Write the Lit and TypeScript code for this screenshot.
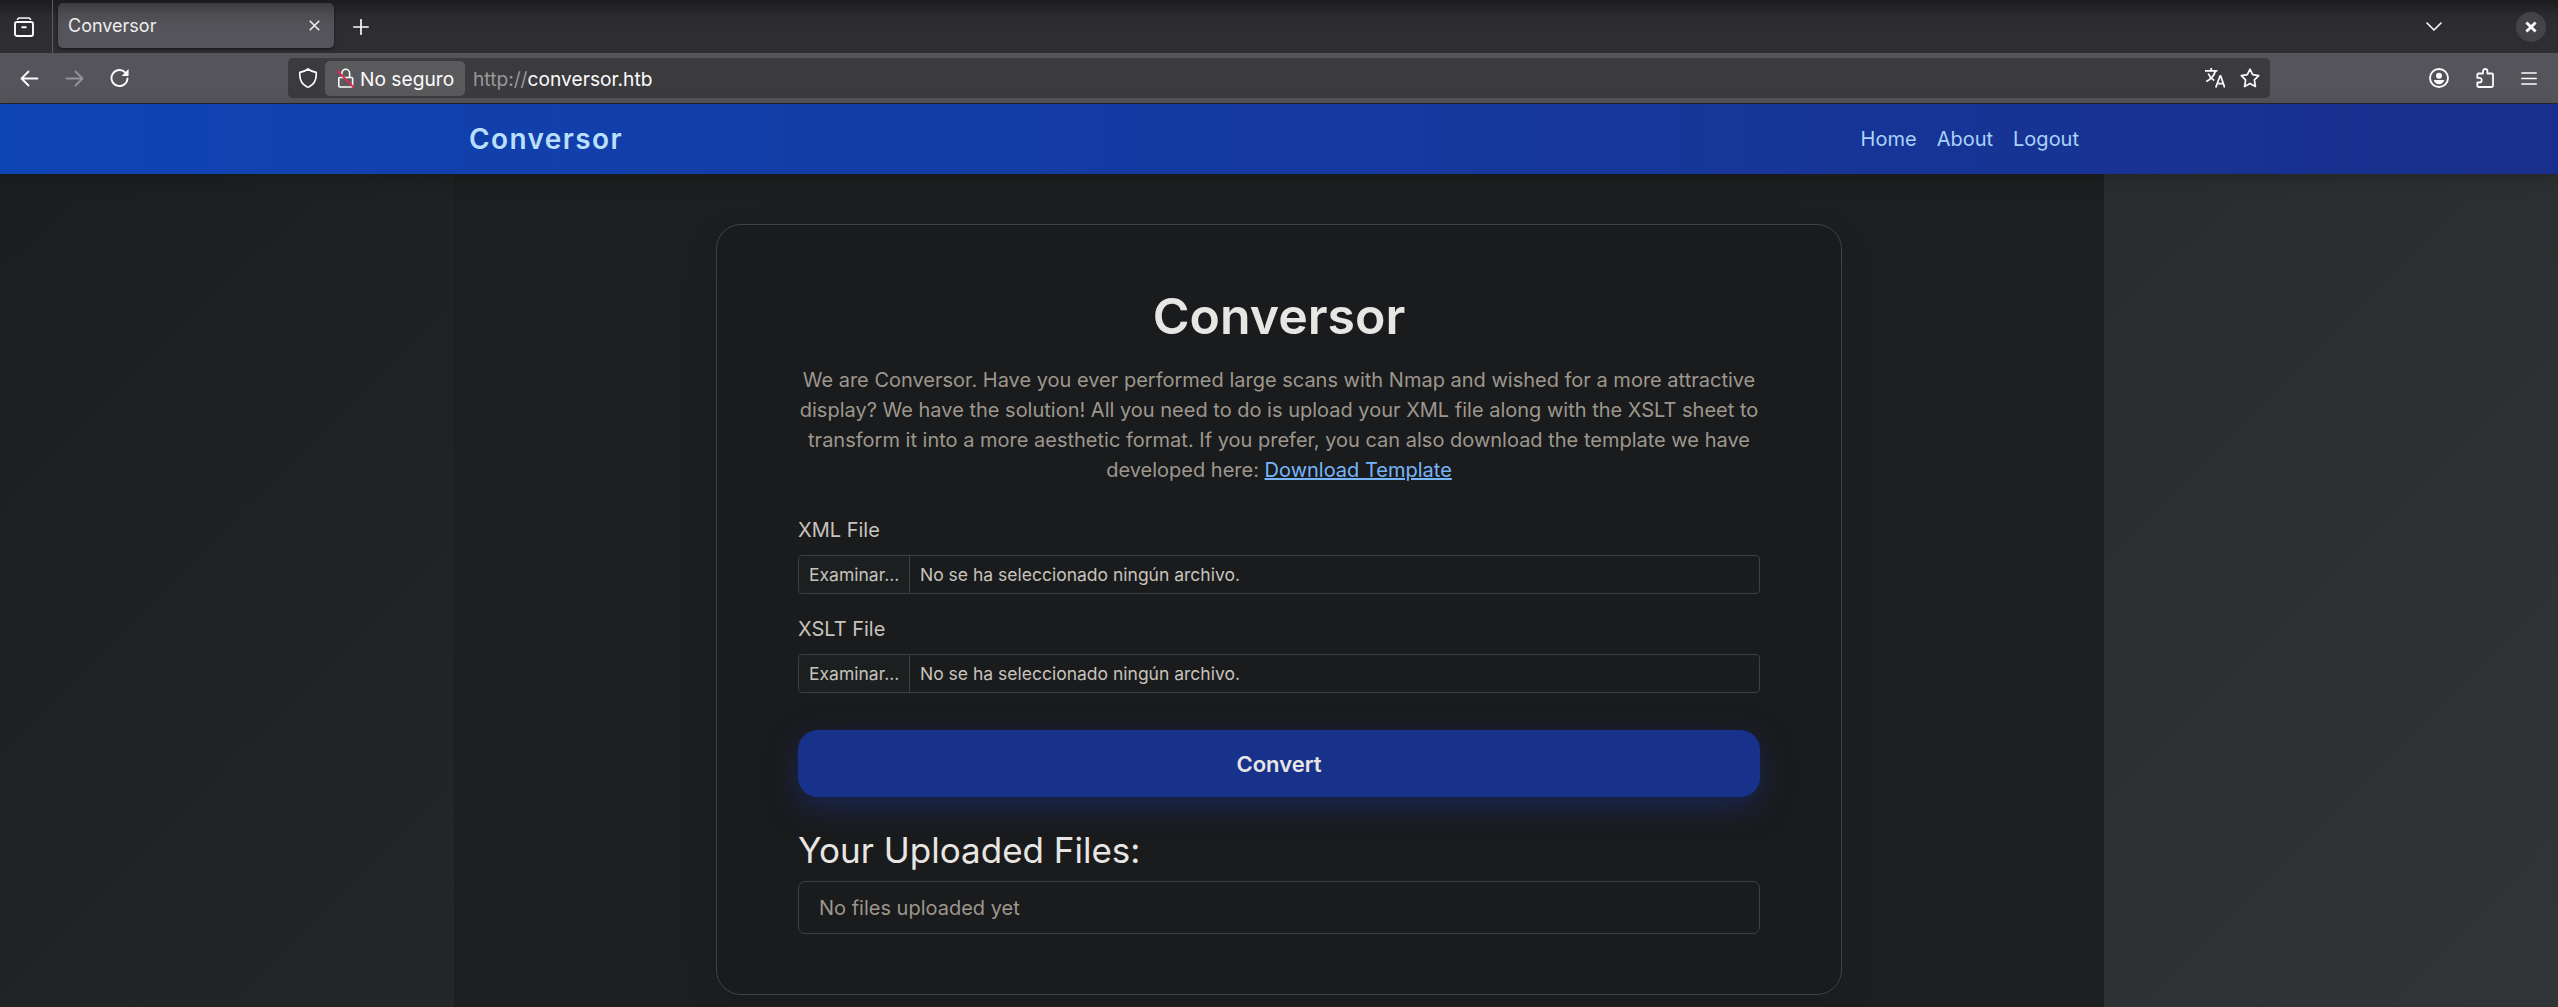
import { LitElement, html, css, svg } from "lit";
import { customElement } from "lit/decorators.js";

const icon = (body: unknown, w = 20, h = 20) =>
  html`<svg width=${w} height=${h} viewBox="0 0 ${w} ${h}" fill="none" stroke="currentColor" stroke-width="1.7" stroke-linecap="round" stroke-linejoin="round">${body}</svg>`;

const icons = {
  view: icon(svg`<path d="M3.600 2.200C3.900 1.300 4.600 1 5.400 1h9.200c.8 0 1.500.3 1.800 1.200"/><rect x="1" y="5" width="18" height="14" rx="2" stroke-width="1.900"/><path d="M8.200 10.300h3.600" stroke-width="1.900"/>`),
  close: icon(svg`<path d="M1.200 1.200l8.600 8.600M9.800 1.200L1.200 9.800" stroke-width="1.600"/>`, 11, 11),
  plus: icon(svg`<path d="M8 .8v14.400M.8 8h14.400" stroke-width="1.700"/>`, 16, 16),
  chevron: icon(svg`<path d="M1 1l7 7 7-7" stroke-width="1.600"/>`, 16, 9),
  winClose: icon(svg`<path d="M1.400 1.400l9.200 9.200M10.600 1.400l-9.200 9.200" stroke-width="2.800" stroke-linecap="butt"/>`, 12, 12),
  back: icon(svg`<path d="M8.500 1.500L1.500 8.500l7 7M1.500 8.500h16" stroke-width="1.800"/>`, 19, 17),
  forward: icon(svg`<path d="M10.500 1.500l7 7-7 7M17.500 8.500h-16" stroke-width="1.800"/>`, 19, 17),
  reload: icon(svg`<path d="M15.400 4.600A8 8 0 1 0 17.500 10.500" stroke-width="1.900"/><path d="M18.600 1v6.300a.7.7 0 0 1-.7.7h-6.200z" fill="currentColor" stroke="none"/>`),
  shield: icon(svg`<path d="M10 1c2.200 1.800 4.800 2.900 8.200 3.300v3.200C18 12.500 15.500 16.500 11.200 18.800q-1.200.6-2.400 0C4.500 16.500 2 12.500 1.800 7.500V4.300C5.200 3.900 7.800 2.800 10 1z"/>`),
  lock: icon(svg`<path d="M4.800 7V5.200a3.900 3.900 0 0 1 7.800 0V9.500M2.800 9.500h11.800a1 1 0 0 1 1 1v7.500a1 1 0 0 1-1 1H2.800a1 1 0 0 1-1-1v-7.500a1 1 0 0 1 1-1z" stroke-width="1.600"/><path d="M.8 3.200l15.600 15.800" stroke="#e22850" stroke-width="1.900"/>`, 17, 20),
  translate: icon(svg`<path d="M0 2.800h12.400M6.200 0v2.800M10.300 3C9.300 7.500 6 11 1.300 13.500M3.200 5.500c1.300 3.200 3.200 5.400 6 7M10.800 19.500l4.300-11.700h.5l4.100 11.700M12.200 15.600h6.300" stroke-width="1.800" stroke-linecap="butt"/>`),
  star: icon(svg`<path d="M10 1.200l2.700 5.500 6 .9-4.300 4.200 1 6.700L10 15.600l-5.400 2.900 1-6.700L1.300 7.600l6-.9z" stroke-width="1.700"/>`),
  account: icon(svg`<circle cx="10" cy="10" r="9" stroke-width="1.900"/><circle cx="10" cy="7.700" r="3" fill="currentColor" stroke="none"/><path d="M4.700 12h10.600c-.6 2.600-2.700 4.300-5.300 4.300S5.300 14.600 4.700 12z" fill="currentColor" stroke="none"/>`),
  puzzle: icon(svg`<path d="M2.500 19a1.200 1.200 0 0 1-1.200-1.200V14.500h2a2.200 2.200 0 0 0 0-4.700h-2V6.700a1.200 1.200 0 0 1 1.200-1.200H7V3.200a2.200 2.200 0 0 1 4.400 0v2.300h4.400A1.200 1.200 0 0 1 17 6.700v11.100a1.200 1.200 0 0 1-1.200 1.200z" stroke-width="1.800"/>`, 18, 20),
  menu: icon(svg`<path d="M.8 1h14.400M.8 6.500h14.400M.8 12h14.400" stroke-width="1.700"/>`, 16, 13),
};

@customElement("browser-chrome")
class BrowserChrome extends LitElement {
  static styles = css`
    :host { display: block; font-family: "Inter", sans-serif; color: #fbfbfe; }
    svg { display: block; flex: none; }
    .tabs { height: 53px; display: flex; align-items: center; box-sizing: border-box; padding: 0 12px 0 14px;
      background: linear-gradient(#1c1c1e, #2b2a2f 16px, #2e2d32 30px); }
    .sep { width: 1px; height: 53px; background: #5b5a60; margin: 0 5px 0 18px; }
    .tab { width: 276px; height: 45px; margin: -2px 19px 0 0; box-sizing: border-box; padding: 0 14px 0 10px; border-radius: 5px;
      display: flex; align-items: center; justify-content: space-between; font-size: 18px; color: #eeeef0;
      background: linear-gradient(#3c3c3f, #4e4d52 12px, #55545a 24px); box-shadow: 0 1px 3px rgba(0,0,0,.6); }
    .grow { flex: 1; }
    .win { width: 30px; height: 30px; border-radius: 50%; background: #444348; display: flex; align-items: center; justify-content: center; margin-left: 74px; }
    .bar { height: 51px; box-sizing: border-box; border-bottom: 1px solid #25252a; background: #55545a; display: flex; align-items: center; padding: 0 21px 0 20px; }
    .fwd { color: #929297; margin: 0 26px 0 26px; }
    .url { width: 1982px; height: 40px; margin-left: 158px; box-sizing: border-box; padding: 0 10px 0 10px; border-radius: 5px;
      background: #3b3b3d; display: flex; align-items: center; font-size: 19.200px; }
    .url span { padding-top: 1px; }
    .chip { height: 35px; width: 140px; box-sizing: border-box; margin: 0 8px 0 7px; padding-left: 12px; display: flex; gap: 6px; align-items: center;
      border-radius: 5px; background: #5a5a5c; white-space: nowrap; }
    .dim { color: #98989b; }
    .tools { display: flex; gap: 15px; }
    .right { display: flex; align-items: center; gap: 27px; }
  `;
  render() {
    return html`
      <div class="tabs">${icons.view}<div class="sep"></div>
        <div class="tab"><span>Conversor</span>${icons.close}</div>${icons.plus}
        <div class="grow"></div>${icons.chevron}<div class="win">${icons.winClose}</div>
      </div>
      <div class="bar">${icons.back}<div class="fwd">${icons.forward}</div>${icons.reload}
        <div class="url">${icons.shield}
          <div class="chip">${icons.lock}<span>No seguro</span></div>
          <span class="dim">http://</span><span>conversor.htb</span>
          <div class="grow"></div><div class="tools">${icons.translate}${icons.star}</div>
        </div>
        <div class="grow"></div>
        <div class="right">${icons.account}${icons.puzzle}${icons.menu}</div>
      </div>`;
  }
}

@customElement("app-root")
class AppRoot extends LitElement {
  static styles = css`
    :host { display: block; height: 1007px; overflow: hidden; font-family: "Inter", sans-serif; font-size: 20px; line-height: 30px; color: #c8c3bc; }
    .nav { position: relative; height: 70px; background: linear-gradient(90deg, #0f44b4, #192f8c); box-shadow: 0 4px 16px rgba(0,0,0,.18); }
    .wrap { width: 1650px; margin: 0 auto; box-sizing: border-box; }
    .nav .wrap { height: 70px; padding: 0 25px 0 15px; display: flex; align-items: center; justify-content: space-between; }
    .brand { font-size: 28px; font-weight: 600; letter-spacing: 1.400px; color: #b9dffc; }
    .links { display: flex; gap: 20px; color: #a9d3fa; }
    .page { height: 833px; background: linear-gradient(135deg, #1b1e1f, #313537); }
    .main { height: 833px; padding-top: 50px; background: #1d1e1f; }
    .card { width: 1126px; height: 771px; margin: 0 auto; box-sizing: border-box; padding: 61px 81px; border: 1px solid #404345; border-radius: 25px;
      background: #1a1b1c; box-shadow: 0 12px 38px rgba(0,0,0,.08); }
    h1 { margin: 0 0 19px; font-size: 50px; line-height: 60px; font-weight: 600; text-align: center; color: #e8e6e3; }
    p { margin: 0 0 30px; text-align: center; color: #9d978e; }
    .link { color: #76b5fa; text-decoration: underline; }
    .label { height: 30px; margin-bottom: 10px; }
    .file { height: 39px; margin-bottom: 20px; box-sizing: border-box; border: 1px solid #3b4042; border-radius: 4px; display: flex; font-size: 17.500px; line-height: 38px; overflow: hidden; }
    .browse { width: 111px; box-sizing: border-box; padding-left: 10px; background: #1b1f20; border-right: 1px solid #3b4042; margin-right: 10px; }
    .convert { height: 67px; margin-top: 37px; border-radius: 20px; display: flex; align-items: center; justify-content: center; font-size: 22px; font-weight: 600;
      color: #e8e6e3; background: #18328b; box-shadow: 0 10px 31px rgba(24,50,139,.5); }
    h2 { margin: 31px 0 9px; font-size: 35px; line-height: 44px; font-weight: 400; color: #e8e6e3; }
    .list { height: 53px; box-sizing: border-box; padding: 11px 20px; border: 1px solid #3b4042; border-radius: 7px; color: #9d978e; }
  `;
  private field(label: string) {
    return html`<div class="label">${label}</div>
      <div class="file"><span class="browse">Examinar...</span><span>No se ha seleccionado ningún archivo.</span></div>`;
  }
  render() {
    return html`
      <browser-chrome></browser-chrome>
      <div class="nav"><div class="wrap"><span class="brand">Conversor</span>
        <div class="links"><span>Home</span><span>About</span><span>Logout</span></div></div></div>
      <div class="page"><div class="wrap main"><div class="card">
        <h1>Conversor</h1>
        <p>We are Conversor. Have you ever performed large scans with Nmap and wished for a more attractive display? We have the solution! All you need to do is upload your XML file along with the XSLT sheet to transform it into a more aesthetic format. If you prefer, you can also download the template we have developed here: <span class="link">Download Template</span></p>
        ${this.field("XML File")}${this.field("XSLT File")}
        <div class="convert">Convert</div>
        <h2>Your Uploaded Files:</h2>
        <div class="list">No files uploaded yet</div>
      </div></div></div>`;
  }
}
